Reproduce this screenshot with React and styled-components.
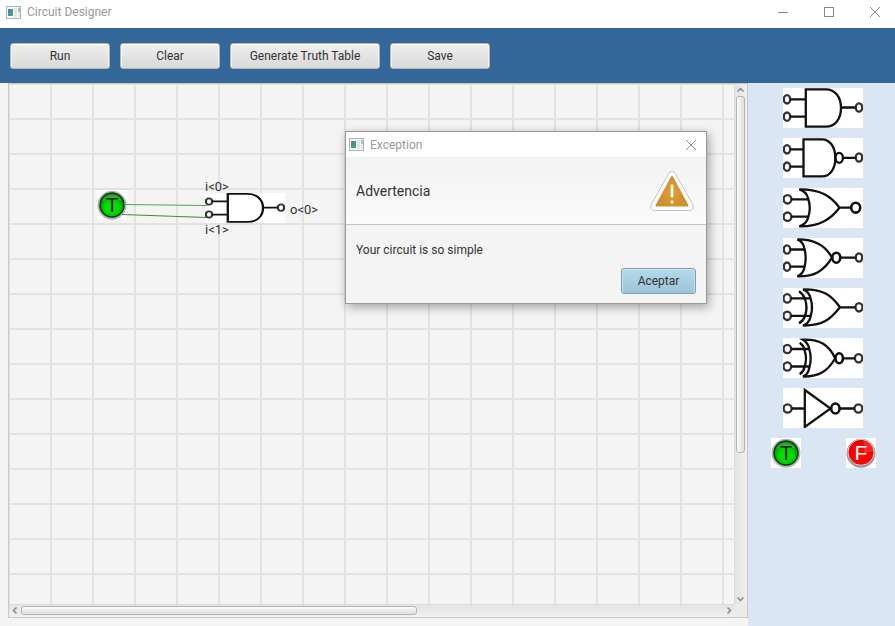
import React from "react";
import styled, { createGlobalStyle, css } from "styled-components";

const GlobalStyle = createGlobalStyle`
  *, *::before, *::after { box-sizing: border-box; }
  body {
    margin: 0;
    background: #f4f4f4;
    color: #333;
    font: 12px/16px Roboto, "Open Sans", sans-serif;
  }
  button { font: inherit; color: inherit; margin: 0; padding: 0; }
`;

const Window = styled.div`
  position: relative;
  display: flex;
  flex-direction: column;
  min-height: 100vh;
`;

const TitleBar = styled.header`
  display: flex;
  align-items: center;
  height: ${(p) => (p.$compact ? 25 : 28)}px;
  padding: ${(p) => (p.$compact ? "0 7px 0 3px" : "0 12px 4px 6px")};
  gap: 6px;
  background: #fff;
  color: #999;
`;

const Title = styled.h1`
  flex: 1;
  margin: 0;
  font-size: 12px;
  font-weight: 400;
`;

const WindowButtons = styled.div`
  display: flex;
  gap: 30px;
`;

const IconButton = styled.button`
  display: grid;
  place-items: center;
  width: 16px;
  height: 16px;
  border: 0;
  background: none;
`;

const Toolbar = styled.nav`
  display: flex;
  align-items: center;
  gap: 10px;
  height: 55px;
  padding: 0 10px;
  background: #336699;
`;

const Button = styled.button`
  min-width: ${(p) => p.$width}px;
  height: 26px;
  border: 1px solid #b4b4b4;
  border-radius: 3px;
  background: linear-gradient(#efefef, #d9d9d9);
  box-shadow: inset 0 1px #fff, inset 1px 0 #f4f4f4, inset -1px 0 #f4f4f4;
  ${(p) =>
    p.$primary &&
    css`
      border-color: #7ba0b0;
      background: linear-gradient(#b2daec, #9dc5d7);
      box-shadow: inset 0 1px #d3eaf4, inset 1px 0 #bfe0ee, inset -1px 0 #bfe0ee;
    `}
`;

const Workspace = styled.main`
  flex: 1;
  display: grid;
  grid-template-columns: minmax(0, 1fr) 147px;
`;

const ScrollFrame = styled.section`
  display: grid;
  grid-template: minmax(0, 1fr) 13px / minmax(0, 1fr) 13px;
  margin: 0 0 8px 8px;
  border: 1px solid #c8c8c8;
  background: #ebebeb;
`;

const Canvas = styled.div`
  position: relative;
  overflow: hidden;
  background-color: #f4f4f4;
  background-image: linear-gradient(90deg, #e2e2e2 2px, transparent 2px),
    linear-gradient(#e2e2e2 2px, transparent 2px);
  background-size: 42px 35px;
  background-position: -1px -1px;
`;

const Placed = styled.div`
  position: absolute;
  left: ${(p) => p.$x}px;
  top: ${(p) => p.$y}px;
  display: flex;
  font-size: 13px;
`;

const Wires = styled.svg`
  position: absolute;
  inset: 0;
  width: 100%;
  height: 100%;
`;

const ScrollBar = styled.div`
  display: flex;
  flex-direction: ${(p) => (p.$vertical ? "column" : "row")};
  padding: ${(p) => (p.$vertical ? "0 2px 0 1px" : "1px 0 2px")};
  border: 0 solid #dcdcdc;
  border-width: ${(p) => (p.$vertical ? "0 0 0 1px" : "1px 0 0")};
  background: linear-gradient(${(p) => (p.$vertical ? "90deg" : "180deg")}, #e4e4e4, #f0f0f0);
`;

const ScrollArrow = styled.button`
  flex: 0 0 12px;
  display: grid;
  place-items: center;
  border: 0;
  background: none;
`;

const Track = styled.div`
  flex: 1;
  display: flex;
  flex-direction: ${(p) => (p.$vertical ? "column" : "row")};
`;

const Thumb = styled.div`
  flex: 0 0 ${(p) => p.$size}%;
  border: 1px solid #b4b4b4;
  border-radius: 3px;
  background: linear-gradient(${(p) => (p.$vertical ? "90deg" : "180deg")}, #fafafa, #dedede);
`;

const Palette = styled.aside`
  display: flex;
  flex-direction: column;
  gap: 10px;
  padding: 5px 19px 5px 23px;
  background: #dae6f4;
`;

const GateList = styled.div`
  display: flex;
  flex-direction: column;
  gap: 10px;
  padding-left: 12px;
`;

const PaletteItem = styled.button`
  display: flex;
  align-self: flex-start;
  border: 0;
  background: none;
`;

const InputRow = styled.div`
  display: flex;
  justify-content: space-between;
`;

const GateDrawing = styled.svg`
  display: block;
  background: #fff;
  fill: none;
  stroke: #111;
  stroke-width: 2.3;
`;

const Dialog = styled.section`
  position: absolute;
  left: 345px;
  top: 131px;
  width: 362px;
  border: 1px solid #999;
  background: #f4f4f4;
  box-shadow: 2px 3px 10px rgba(0, 0, 0, 0.35);
`;

const DialogHeader = styled.div`
  display: flex;
  align-items: center;
  justify-content: space-between;
  height: 68px;
  padding: 0 10px;
  border-bottom: 1px solid #c4c4c4;
  background: linear-gradient(#f2f2f2, #fbfbfb);
`;

const DialogHeading = styled.h2`
  margin: 0;
  font-size: 14px;
  font-weight: 400;
`;

const DialogText = styled.p`
  margin: 0;
  padding: 17px 10px 10px;
`;

const DialogActions = styled.div`
  display: flex;
  justify-content: flex-end;
  padding: 0 10px 9px;
`;

function AppIcon({ id }) {
  return (
    <svg width="15" height="13" viewBox="0 0 15 13" aria-hidden="true">
      <defs>
        <linearGradient id={id} x1="0" y1="0" x2="1" y2="1">
          <stop offset="0" stopColor="#4a7fb0" />
          <stop offset="1" stopColor="#4fa876" />
        </linearGradient>
      </defs>
      <rect x="0.5" y="0.5" width="14" height="12" fill="#f6f8f8" stroke="#adb3b7" />
      <rect x="2" y="3" width="5" height="7" fill={`url(#${id})`} />
      <rect x="8" y="2" width="3" height="9" fill="#e3e5e5" />
      <rect x="12" y="2" width="2" height="4" fill="#9cc4cf" />
      <rect x="12" y="6" width="2" height="5" fill="#e3efe3" />
    </svg>
  );
}

function CloseIcon() {
  return (
    <svg width="12" height="12" viewBox="0 0 12 12" stroke="#888" aria-hidden="true">
      <path d="M1 1 11 11M11 1 1 11" />
    </svg>
  );
}

const arrows = {
  up: "M1.5 5.5 4.5 2.5 7.5 5.5",
  down: "M1.5 3.5 4.5 6.5 7.5 3.5",
  left: "M5.5 1.5 2.5 4.5 5.5 7.5",
  right: "M3.5 1.5 6.5 4.5 3.5 7.5",
};

function Arrow({ direction }) {
  return (
    <ScrollArrow type="button" aria-label={`Scroll ${direction}`}>
      <svg width="9" height="9" viewBox="0 0 9 9" fill="none" stroke="#888" strokeWidth="1.5">
        <path d={arrows[direction]} />
      </svg>
    </ScrollArrow>
  );
}

function Terminal({ x, y, rx = 3.2, ry = 4.2 }) {
  return <ellipse cx={x} cy={y} rx={rx} ry={ry} stroke="#333" />;
}

const gates = {
  AND: (
    <>
      <Terminal x={4} y={11.3} />
      <Terminal x={4} y={28.7} />
      <Terminal x={76} y={19.5} />
      <path d="M7 11.3H23M7 28.7H23M58 19.5H72.5M22.8 1.3H43C52 1.3 58 9 58 20S52 38.6 43 38.6H22.8Z" />
    </>
  ),
  NAND: (
    <>
      <Terminal x={4} y={11.3} />
      <Terminal x={4} y={28.7} />
      <Terminal x={76} y={19.5} />
      <ellipse cx="56.2" cy="19.8" rx="3.7" ry="5" />
      <path d="M7 11.3H20M7 28.7H20M60 19.8H72.5M20.5 1.3H39C47 1.3 52.3 9 52.3 20S47 38.4 39 38.4H20.5Z" />
    </>
  ),
  OR: (
    <>
      <Terminal x={4.5} y={11.3} rx={3.9} />
      <Terminal x={4.5} y={28.7} rx={3.9} />
      <ellipse cx="72.7" cy="19.7" rx="4.5" ry="4.9" strokeWidth="2.6" />
      <path d="M8 11.3H25M8 28.7H25M56.5 19.7H68M16.3 1.3C37 1 48 8 56.5 19.7C47 32 36 38.7 16.3 38.3C22 36.5 24 34 25 30Q28.500 20 25 10C24 6 22 3 16.3 1.3Z" />
    </>
  ),
  NOR: (
    <>
      <Terminal x={4} y={11.5} />
      <Terminal x={4} y={28.7} />
      <Terminal x={76} y={19.5} />
      <ellipse cx="53.3" cy="19.7" rx="4" ry="5" strokeWidth="2.6" />
      <path d="M7 11.5H21M7 28.7H21M57.5 19.7H72.5M14.3 1.3C33 1 43 8 49 19.7C41 33 31 38.7 14.3 38.3C19 36.500 20.500 34 21.300 30Q24 20 21.300 10C20.500 6 19 3 14.3 1.3Z" />
    </>
  ),
  XOR: (
    <>
      <Terminal x={4.2} y={10.4} rx={3.7} />
      <Terminal x={4.2} y={27.8} rx={3.7} />
      <Terminal x={76} y={19.3} rx={3.5} />
      <path d="M8 10.4H27.5M8 27.8H27.5M57 19.3H72.5M20 1.3C40 1 48 7 57 19.3C47 32 39 38 20 37.6C24.500 36 26.500 33 27.500 29Q30.500 19.500 27.500 10C26.500 6 24.500 3 20 1.3Z" />
      <path d="M16 3.3C20 6 21 8 22 11Q25 19.500 22 28C21 31 20 33 16 35.3" />
    </>
  ),
  XNOR: (
    <>
      <Terminal x={4.3} y={11} rx={3.8} />
      <Terminal x={4.3} y={28.5} rx={3.8} />
      <Terminal x={75.6} y={20.3} rx={3.7} />
      <ellipse cx="56.2" cy="20.3" rx="3.7" ry="5" strokeWidth="2.6" />
      <path d="M8 11H26M8 28.5H26M60 20.3H72M20 1.7C37 1 46 7 52.2 20.3C45 33 36 39 20 38.6C24 37 25.500 34 26.300 30Q29 20.300 26.300 11C25.500 7 24 4 20 1.7Z" />
      <path d="M16.7 4.7C20 7 21 9 21.500 12Q24.500 20.500 21.500 29C21 32 20 34 16.7 36.3" />
    </>
  ),
  NOT: (
    <>
      <Terminal x={4.6} y={20.5} rx={4} />
      <Terminal x={75.4} y={20.5} rx={3.9} />
      <ellipse cx="52.4" cy="20.5" rx="4.2" ry="5" strokeWidth="2.6" />
      <path d="M8.6 20.5H21.8M57 20.5H71.5M21.8 2 47.5 20.5 21.8 39Z" />
    </>
  ),
};

function Gate({ type, height = 40 }) {
  return (
    <GateDrawing
      width="80"
      height={height}
      viewBox="0 0 80 40"
      preserveAspectRatio="none"
      role="img"
      aria-label={`${type} gate`}
    >
      {gates[type]}
    </GateDrawing>
  );
}

function Source({ on, id }) {
  return (
    <svg width="30" height="30" viewBox="0 0 30 30" role="img" aria-label={on ? "True" : "False"}>
      <defs>
        <radialGradient id={id} cx="0.5" cy="0.6" r="0.6">
          <stop offset="0" stopColor={on ? "#00f000" : "#ff0808"} />
          <stop offset="0.6" stopColor={on ? "#00cc00" : "#fb0000"} />
          <stop offset="1" stopColor={on ? "#006400" : "#e80000"} />
        </radialGradient>
      </defs>
      <rect width="30" height="30" fill="#fff" />
      <circle cx="15" cy="15.3" r="13.5" fill={on ? "#8e8e98" : "#777"} stroke={on ? "#b4b4bc" : "#999"} strokeWidth="2" />
      <circle
        cx="15"
        cy={on ? 15 : 14.3}
        r={on ? 12 : 13}
        fill={`url(#${id})`}
        stroke={on ? "#123c12" : "#e6d0d0"}
        strokeWidth={on ? 1.5 : 1}
      />
      <path
        d={on ? "M5 11C7 2 23 2 25 11Q15 7 5 11Z" : "M18 16C21 14 25 14 28 13C27 7 23 3 18 2Z"}
        fill="#fff"
        opacity="0.16"
      />
      <text
        x="15"
        y="22"
        textAnchor="middle"
        fontFamily="Liberation Sans, sans-serif"
        fontSize={on ? 20 : 21}
        fill={on ? "#001400" : "#fff"}
      >
        {on ? "T" : "F"}
      </text>
    </svg>
  );
}

function WarningIcon() {
  return (
    <svg width="48" height="48" viewBox="0 0 48 48" role="img" aria-label="Warning">
      <defs>
        <radialGradient id="warning-fill">
          <stop offset="0" stopColor="#e49a35" />
          <stop offset="1" stopColor="#cc922b" />
        </radialGradient>
      </defs>
      <path
        d="M20.4 7.2Q24 1.500 27.600 7.200L44.800 37.500Q46.500 43.200 41.500 43.500H6.500Q1.500 43.200 3.200 37.500Z"
        fill="#fff"
        stroke="#c4c4c4"
      />
      <path
        d="M24 10 39.500 38.500H8.500Z"
        fill="url(#warning-fill)"
        stroke="url(#warning-fill)"
        strokeWidth="2"
        strokeLinejoin="round"
      />
      <path d="M24 17.500V30.500M24 33.500V36.500" stroke="#fff" strokeWidth="2.600" />
    </svg>
  );
}

export default function App() {
  return (
    <Window>
      <GlobalStyle />
      <TitleBar>
        <AppIcon id="main-icon" />
        <Title>Circuit Designer</Title>
        <WindowButtons>
          <IconButton type="button" aria-label="Minimize">
            <svg width="12" height="12" viewBox="0 0 12 12" stroke="#888">
              <path d="M1 6.500H11" />
            </svg>
          </IconButton>
          <IconButton type="button" aria-label="Maximize">
            <svg width="12" height="12" viewBox="0 0 12 12" fill="none" stroke="#888">
              <rect x="1.500" y="1.500" width="9" height="9" />
            </svg>
          </IconButton>
          <IconButton type="button" aria-label="Close">
            <CloseIcon />
          </IconButton>
        </WindowButtons>
      </TitleBar>
      <Toolbar>
        <Button type="button" $width={100}>Run</Button>
        <Button type="button" $width={100}>Clear</Button>
        <Button type="button" $width={150}>Generate Truth Table</Button>
        <Button type="button" $width={100}>Save</Button>
      </Toolbar>
      <Workspace>
        <ScrollFrame>
          <Canvas>
            <Placed $x={88} $y={106}><Source on id="node-source" /></Placed>
            <Placed $x={196} $y={109}><Gate type="AND" height={30} /></Placed>
            <Placed $x={196} $y={95}>i&lt;0&gt;</Placed>
            <Placed $x={196} $y={138}>i&lt;1&gt;</Placed>
            <Placed $x={281} $y={118}>o&lt;0&gt;</Placed>
            <Wires aria-hidden="true">
              <path d="M115 120.500 198 121.500" stroke="#4cab4c" />
              <path d="M113 130.500 198 133.500" stroke="#45901c" />
            </Wires>
          </Canvas>
          <ScrollBar $vertical>
            <Arrow direction="up" />
            <Track $vertical><Thumb $vertical $size={72} /></Track>
            <Arrow direction="down" />
          </ScrollBar>
          <ScrollBar>
            <Arrow direction="left" />
            <Track><Thumb $size={56.5} /></Track>
            <Arrow direction="right" />
          </ScrollBar>
        </ScrollFrame>
        <Palette>
          <GateList>
            {Object.keys(gates).map((type) => (
              <PaletteItem key={type} type="button"><Gate type={type} /></PaletteItem>
            ))}
          </GateList>
          <InputRow>
            <PaletteItem type="button"><Source on id="palette-true" /></PaletteItem>
            <PaletteItem type="button"><Source id="palette-false" /></PaletteItem>
          </InputRow>
        </Palette>
      </Workspace>
      <Dialog role="dialog" aria-label="Exception">
        <TitleBar $compact>
          <AppIcon id="dialog-icon" />
          <Title as="h2">Exception</Title>
          <WindowButtons>
            <IconButton type="button" aria-label="Close dialog"><CloseIcon /></IconButton>
          </WindowButtons>
        </TitleBar>
        <DialogHeader>
          <DialogHeading>Advertencia</DialogHeading>
          <WarningIcon />
        </DialogHeader>
        <DialogText>Your circuit is so simple</DialogText>
        <DialogActions>
          <Button type="button" $width={75} $primary>Aceptar</Button>
        </DialogActions>
      </Dialog>
    </Window>
  );
}
